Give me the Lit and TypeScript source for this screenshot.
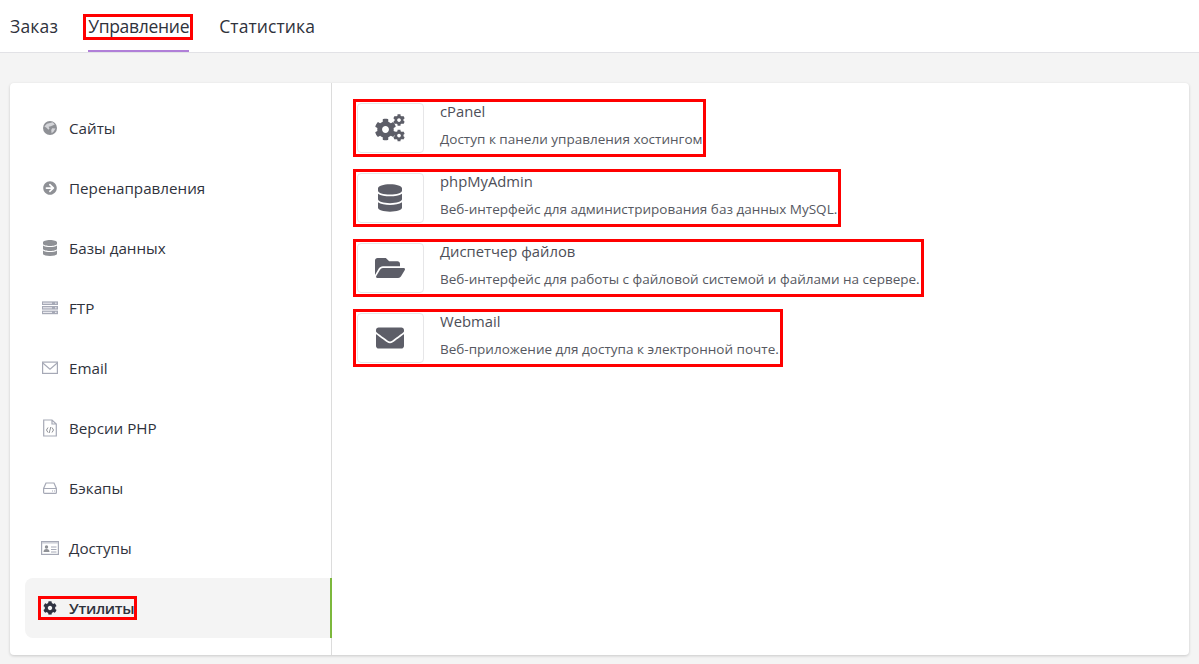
import { LitElement, html, svg, css } from "lit";
import { customElement } from "lit/decorators.js";

const COG = "M487.4 315.7l-42.6-24.6c4.3-23.2 4.3-47 0-70.2l42.6-24.6c4.9-2.8 7.1-8.6 5.5-14-11.1-35.6-30-67.8-54.7-94.6-3.8-4.1-10-5.1-14.8-2.3L380.8 110c-17.9-15.4-38.5-27.3-60.8-35.1V25.8c0-5.6-3.9-10.5-9.4-11.7-36.7-8.2-74.3-7.8-109.2 0-5.5 1.2-9.4 6.1-9.4 11.7V75c-22.2 7.9-42.8 19.8-60.8 35.1L88.7 85.5c-4.9-2.8-11-1.9-14.8 2.3-24.7 26.7-43.6 58.9-54.7 94.6-1.7 5.4.6 11.2 5.5 14L67.3 221c-4.3 23.2-4.3 47 0 70.2l-42.6 24.6c-4.9 2.8-7.1 8.6-5.5 14 11.1 35.6 30 67.8 54.7 94.6 3.8 4.1 10 5.1 14.8 2.3l42.6-24.6c17.9 15.4 38.5 27.3 60.8 35.1v49.2c0 5.6 3.9 10.5 9.4 11.7 36.7 8.2 74.3 7.8 109.2 0 5.5-1.2 9.4-6.1 9.4-11.7v-49.2c22.2-7.9 42.8-19.8 60.8-35.1l42.6 24.6c4.9 2.8 11 1.9 14.8-2.3 24.7-26.7 43.6-58.9 54.7-94.6 1.5-5.5-.7-11.3-5.6-14.1zM256 336c-44.1 0-80-35.9-80-80s35.9-80 80-80 80 35.9 80 80-35.9 80-80 80z";
const DB = "M448 73.143v45.714C448 159.143 347.667 192 224 192S0 159.143 0 118.857V73.143C0 32.857 100.333 0 224 0s224 32.857 224 73.143zM448 176v102.857C448 319.143 347.667 352 224 352S0 319.143 0 278.857V176c48.125 33.143 136.208 48.572 224 48.572S399.874 209.143 448 176zm0 160v102.857C448 479.143 347.667 512 224 512S0 479.143 0 438.857V336c48.125 33.143 136.208 48.572 224 48.572S399.874 369.143 448 336z";
const FOLDER = "M572.694 292.093L500.27 416.248A63.997 63.997 0 0 1 444.989 448H45.025c-18.523 0-30.064-20.093-20.731-36.093l72.424-124.155A64 64 0 0 1 152 256h399.964c18.523 0 30.064 20.093 20.73 36.093zM152 224h328v-48c0-26.51-21.49-48-48-48H272l-64-64H48C21.49 64 0 85.49 0 112v278.046l69.077-118.418C86.214 242.25 117.989 224 152 224z";
const MAIL = "M502.3 190.8c3.9-3.1 9.7-.2 9.7 4.7V400c0 26.5-21.5 48-48 48H48c-26.5 0-48-21.5-48-48V195.6c0-5 5.7-7.8 9.7-4.7 22.4 17.4 52.1 39.5 154.1 113.6 21.1 15.4 56.7 47.8 92.2 47.6 35.7.3 72-32.8 92.3-47.6 102-74.1 131.6-96.3 154-113.7zM256 320c23.2.4 56.6-29.2 73.4-41.4 132.7-96.3 142.8-104.7 173.4-128.7 5.8-4.5 9.2-11.5 9.2-18.9v-19c0-26.5-21.5-48-48-48H48C21.5 64 0 85.5 0 112v19c0 7.4 3.4 14.3 9.2 18.9 30.6 23.9 40.7 32.4 173.4 128.7 16.8 12.2 50.2 41.8 73.4 41.4z";
const ARROW = "M256 8c137 0 248 111 248 248S393 504 256 504 8 393 8 256 119 8 256 8zm-28.9 143.6l75.5 72.4H120c-13.3 0-24 10.7-24 24v16c0 13.3 10.7 24 24 24h182.6l-75.5 72.4c-9.7 9.3-9.9 24.8-.4 34.3l11 10.9c9.4 9.4 24.6 9.4 33.9 0L404.3 273c9.4-9.4 9.4-24.6 0-33.9L271.6 106.3c-9.4-9.4-24.6-9.4-33.9 0l-11 10.9c-9.5 9.6-9.3 25.1.4 34.4z";

const side = (w: number, vb: string, body: unknown) =>
  html`<svg class="ico" width=${w} height="18" viewBox=${vb}>${body}</svg>`;

const icons = {
  globe: side(14, "0 0 16 16", svg`<circle cx="8" cy="8" r="8" fill="#8f9196"/><path d="M4.5 3.2 8 2.4 11 1.5 13.5 4 9 6 6.4 6.6 7.4 8.6 6.2 10 4 7.6 1.6 6.4ZM10.5 8.2 14.4 8.6 12 12.4 9.8 14 9.4 10.4Z" fill="#d4d5d9"/>`),
  arrow: side(14, "0 0 512 512", svg`<path d=${ARROW} fill="#8f9196"/>`),
  db: side(14, "0 0 448 512", svg`<path d=${DB} fill="#8f9196"/>`),
  ftp: side(16, "0 0 16 18", svg`<g fill="#a6a9b6"><rect y="2.4" width="16" height="3.6"/><rect y="7" width="16" height="3.6"/><rect y="11.6" width="16" height="3.6"/></g><g fill="#e9e9ee"><rect x="1" y="3.6" width="9" height="1.2"/><rect x="1" y="8.2" width="9" height="1.2"/><rect x="1" y="12.8" width="9" height="1.2"/><rect x="13" y="3.6" width="1.6" height="1.2"/><rect x="13" y="8.2" width="1.6" height="1.2"/><rect x="13" y="12.8" width="1.6" height="1.2"/></g>`),
  mail: side(16, "0 0 16 18", svg`<rect x=".6" y="3.1" width="14.8" height="11.3" fill="none" stroke="#a6a9b6" stroke-width="1.2"/><path d="M.8 4 8 10.2 15.2 4" fill="none" stroke="#a6a9b6" stroke-width="1.1"/>`),
  php: side(14, "0 0 14 18", svg`<path d="M.7 1H9L13.3 5V17H.7Z M9 1V5H13.3" fill="none" stroke="#a6a9b6" stroke-width="1.2"/><path d="M5 8.5 3.5 11 5 13.5M9 8.5 10.5 11 9 13.5M7.8 8 6.2 14" fill="none" stroke="#8f9196" stroke-width="1"/>`),
  hdd: side(14, "0 0 14 18", svg`<path d="M3 4H11L13.4 9.5V13.4A1 1 0 0 1 12.4 14.4H1.6A1 1 0 0 1 .6 13.4V9.5ZM.6 9.5H13.4" fill="none" stroke="#a6a9b6" stroke-width="1.2"/><path d="M9 12h1M11 12h1" stroke="#a6a9b6"/>`),
  card: side(18, "0 0 18 18", svg`<rect x=".6" y="2.6" width="16.8" height="12.8" fill="none" stroke="#a6a9b6" stroke-width="1.2"/><path d="M1 3h16v1.6H1Z" fill="#cfd1d8"/><circle cx="5.5" cy="8" r="1.7" fill="#8f9196"/><path d="M2.5 13c0-2 1-3 3-3s3 1 3 3Z" fill="#8f9196"/><path d="M10 8h5.5M10 10.5h5.5M10 13h5.5" stroke="#a6a9b6"/>`),
  cog: side(14, "0 0 512 512", svg`<path d=${COG} fill="#2f3342"/>`),
};

const menu: [keyof typeof icons, string][] = [
  ["globe", "Сайты"],
  ["arrow", "Перенаправления"],
  ["db", "Базы данных"],
  ["ftp", "FTP"],
  ["mail", "Email"],
  ["php", "Версии PHP"],
  ["hdd", "Бэкапы"],
  ["card", "Доступы"],
];

const big = {
  cpanel: html`<svg width="32" height="28" viewBox="0 0 32 28"><g fill="#5d5e68">
    <path d=${COG} transform="translate(.5 4.5) scale(.043)"/>
    <path d=${COG} transform="translate(19 0) scale(.0235)"/>
    <path d=${COG} transform="translate(19 15.5) scale(.0235)"/></g></svg>`,
  db: html`<svg width="24" height="30" viewBox="0 0 448 512"><path d=${DB} fill="#5d5e68"/></svg>`,
  folder: html`<svg width="30" height="30" viewBox="0 0 576 512"><path d=${FOLDER} fill="#5d5e68"/></svg>`,
  mail: html`<svg width="28" height="30" viewBox="0 0 512 512"><path d=${MAIL} fill="#5d5e68"/></svg>`,
};

const tools: [keyof typeof big, string, string][] = [
  ["cpanel", "cPanel", "Доступ к панели управления хостингом"],
  ["db", "phpMyAdmin", "Веб-интерфейс для администрирования баз данных MySQL."],
  ["folder", "Диспетчер файлов", "Веб-интерфейс для работы с файловой системой и файлами на сервере."],
  ["mail", "Webmail", "Веб-приложение для доступа к электронной почте."],
];

@customElement("app-root")
export class AppRoot extends LitElement {
  static styles = css`
    :host { display: block; height: 664px; background: #f4f4f4; font-family: "Open Sans", sans-serif; color: #2f3342; overflow: hidden; }
    .top { height: 52px; background: #fff; border-bottom: 1px solid #e2e2e6; display: flex; gap: 30px; padding-left: 10px; }
    .tab { position: relative; font-size: 17.5px; line-height: 52px; color: #2f323c; }
    .tab.first { letter-spacing: .2px; }
    .tab.on { letter-spacing: -.3px; }
    .tab.last { letter-spacing: .1px; }
    .tab.on::after { content: ""; position: absolute; left: 0; right: 0; bottom: 0; height: 2px; background: #b07fd8; }
    .tab .mark { position: absolute; left: -5px; right: -4px; top: 14px; height: 26px; box-sizing: border-box; border: 3px solid #f00; }
    .card { margin: 30px 10px 0; height: 572px; background: #fff; border-radius: 4px; box-shadow: 0 1px 3px rgba(0,0,0,.18); display: flex; }
    .side { width: 322px; box-sizing: border-box; border-right: 1px solid #dcdcdc; padding: 15px 0 0 15px; }
    .item { height: 60px; display: flex; align-items: center; padding-left: 15px; font-size: 15.2px; color: #2f323c; }
    .slot { width: 29px; flex: none; display: flex; justify-content: flex-start; }
    .slotin { width: 20px; display: flex; justify-content: center; }
    .ico { display: block; }
    .item.on { background: #f4f4f4; border-radius: 8px 0 0 8px; border-right: 2px solid #7cb83c; margin-right: -1px; font-weight: 600; letter-spacing: -.3px; position: relative; }
    .item.on .frame { position: absolute; left: 13px; top: 18px; width: 99px; height: 24px; box-sizing: border-box; border: 3px solid #f00; }
    .main { padding: 16px 0 0 21px; display: flex; flex-direction: column; align-items: flex-start; gap: 12px; }
    .tool { display: flex; height: 58px; box-sizing: border-box; border: 3px solid #f00; padding: 1px; }
    .box { width: 67px; height: 50px; box-sizing: border-box; border: 1px solid #e6e6e8; border-radius: 4px; display: flex; align-items: center; justify-content: center; flex: none; padding-right: 2px; }
    .txt { margin-left: 16px; display: flex; flex-direction: column; }
    .name { font-size: 14.8px; line-height: 20px; margin-top: -2px; color: #4d4f58; }
    .desc { font-size: 13.52px; line-height: 20px; margin-top: 8px; color: #565861; white-space: nowrap; }
  `;
  render() {
    return html`
      <div class="top">
        <div class="tab first">Заказ</div>
        <div class="tab on">Управление<span class="mark"></span></div>
        <div class="tab last">Статистика</div>
      </div>
      <div class="card">
        <div class="side">
          ${menu.map(([i, t]) => html`<div class="item"><span class="slot"><span class="slotin">${icons[i]}</span></span>${t}</div>`)}
          <div class="item on"><span class="frame"></span><span class="slot"><span class="slotin">${icons.cog}</span></span>Утилиты</div>
        </div>
        <div class="main">
          ${tools.map(([i, n, d]) => html`<div class="tool"><div class="box">${big[i]}</div><div class="txt"><div class="name">${n}</div><div class="desc">${d}</div></div></div>`)}
        </div>
      </div>`;
  }
}
